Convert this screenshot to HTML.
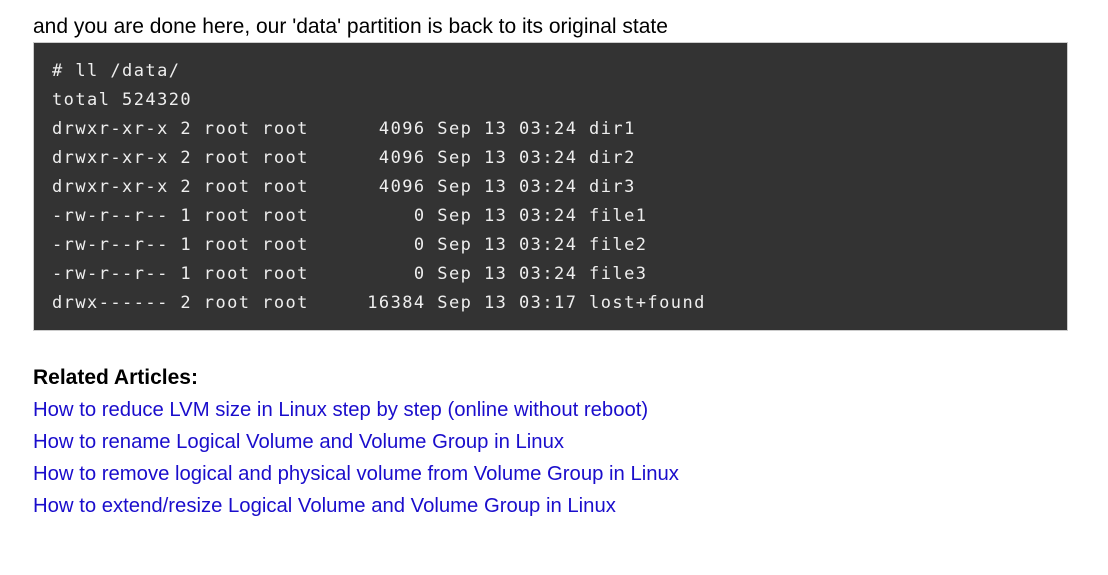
<!DOCTYPE html>
<html><head><meta charset="utf-8"><style>
body{margin:0;background:#fff;font-family:"Liberation Sans",sans-serif;font-size:20px;color:#000}
.p{position:absolute;left:33px;top:14px;line-height:26px;white-space:nowrap;font-size:21px}
pre{position:absolute;left:33px;top:42px;margin:0;background:#333;border:1px solid #ccc;color:#eee;font-family:"DejaVu Sans Mono","Liberation Mono",monospace;font-size:17px;letter-spacing:1.44px;line-height:29px;padding:14px 0 0 18px;box-sizing:border-box;width:1035px;height:289px}
.r{position:absolute;left:33px;top:362px;line-height:32px}
.r b{display:block;font-size:21px;line-height:32px}
.r a{display:block;color:#1a0dcc;text-decoration:none;font-size:20.3px}
</style></head><body>
<div class="p">and you are done here, our 'data' partition is back to its original state</div>
<pre># ll /data/
total 524320
drwxr-xr-x 2 root root      4096 Sep 13 03:24 dir1
drwxr-xr-x 2 root root      4096 Sep 13 03:24 dir2
drwxr-xr-x 2 root root      4096 Sep 13 03:24 dir3
-rw-r--r-- 1 root root         0 Sep 13 03:24 file1
-rw-r--r-- 1 root root         0 Sep 13 03:24 file2
-rw-r--r-- 1 root root         0 Sep 13 03:24 file3
drwx------ 2 root root     16384 Sep 13 03:17 lost+found</pre>
<div class="r"><b>Related Articles:</b>
<a>How to reduce LVM size in Linux step by step (online without reboot)</a>
<a>How to rename Logical Volume and Volume Group in Linux</a>
<a>How to remove logical and physical volume from Volume Group in Linux</a>
<a>How to extend/resize Logical Volume and Volume Group in Linux</a></div>
</body></html>
